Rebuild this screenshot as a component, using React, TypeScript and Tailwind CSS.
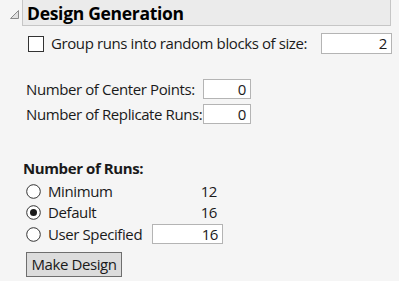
import React from "react";

const font = { fontFamily: '"Open Sans", "Noto Sans", sans-serif' };

function Radio({ checked }: { checked?: boolean }) {
  return (
    <svg width="15" height="15" viewBox="0 0 15 15" className="shrink-0">
      <circle cx="7.5" cy="7.5" r="6.8" fill="#fff" stroke="#333" strokeWidth="1" />
      {checked && <circle cx="7.5" cy="7.5" r="3.5" fill="#1a1a1a" />}
    </svg>
  );
}

export default function App() {
  return (
    <div className="w-[399px] h-[281px] bg-[#f5f5f5] overflow-hidden text-[15px] text-[#1a1a1a] leading-none tracking-[-0.4px]" style={font}>
      <div className="flex items-center h-[27px] mt-[-1px]">
        <svg width="22" height="27" viewBox="0 0 22 27" className="shrink-0">
          <path d="M10.5 19.5 L18.5 19.5 L18.5 11.5 Z" fill="#e0e0e0" stroke="#8a8a8a" strokeWidth="1" />
        </svg>
        <div className="w-[369px] h-[27px] bg-[#ebebeb] border border-[#c6c6c6] flex items-center pl-[4px]">
          <span className="text-[17.5px] font-bold text-black tracking-[-0.3px] mt-[2px]">Design Generation</span>
        </div>
      </div>
      <div className="flex items-center mt-[7px] h-[21px]">
        <div className="ml-[28px] w-[16px] h-[16px] border border-[#333] bg-white shrink-0" />
        <span className="ml-[7px] whitespace-nowrap">Group runs into random blocks of size:</span>
        <div className="ml-auto mr-[7px] w-[71px] h-[21px] bg-white border border-[#b4b4b4] flex items-center justify-end pr-[4px]">2</div>
      </div>
      <div className="mt-[25px] ml-[26px] flex flex-col gap-[5px]">
        <div className="flex items-center h-[20px]">
          <span className="w-[177px] whitespace-nowrap">Number of Center Points:</span>
          <div className="w-[48px] h-[20px] bg-white border border-[#b4b4b4] flex items-center justify-end pr-[4px]">0</div>
        </div>
        <div className="flex items-center h-[20px]">
          <span className="w-[177px] whitespace-nowrap">Number of Replicate Runs:</span>
          <div className="w-[48px] h-[20px] bg-white border border-[#b4b4b4] flex items-center justify-end pr-[4px]">0</div>
        </div>
      </div>
      <div className="mt-[37px] ml-[23px] font-bold">Number of Runs:</div>
      <div className="ml-[26px] mt-[6px] flex flex-col gap-[3px]">
        <div className="flex items-center h-[18px]">
          <Radio />
          <span className="ml-[7px] w-[111px]">Minimum</span>
          <span className="w-[58px] text-right">12</span>
        </div>
        <div className="flex items-center h-[18px]">
          <Radio checked />
          <span className="ml-[7px] w-[111px]">Default</span>
          <span className="w-[58px] text-right">16</span>
        </div>
        <div className="flex items-center h-[20px]">
          <Radio />
          <span className="ml-[7px] w-[104px] whitespace-nowrap">User Specified</span>
          <div className="w-[71px] h-[20px] bg-white border border-[#b4b4b4] flex items-center justify-end pr-[4px]">16</div>
        </div>
      </div>
      <div className="ml-[26px] mt-[8px] w-[96px] h-[25px] bg-[#dcdcdc] border border-[#6e6e6e] flex items-center justify-center">
        Make Design
      </div>
    </div>
  );
}
